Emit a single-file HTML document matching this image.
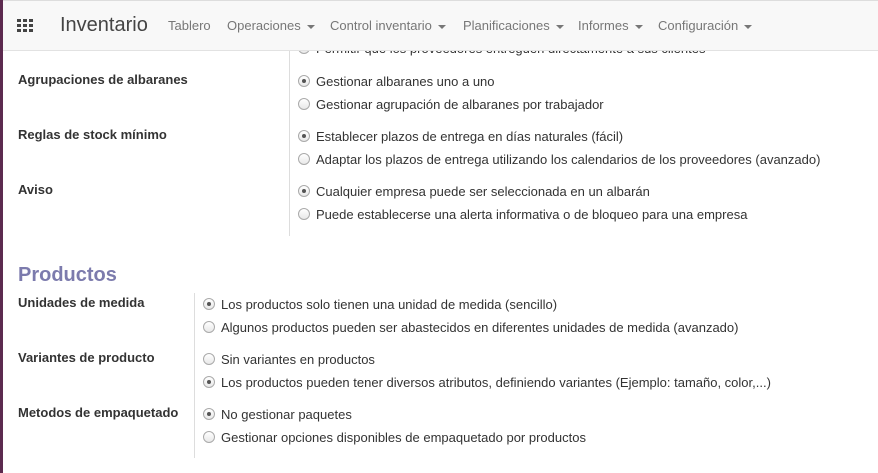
<!DOCTYPE html>
<html><head><style>
body{margin:0;width:878px;height:473px;overflow:hidden;background:#fff;font-family:"Liberation Sans",sans-serif;color:#333;font-size:13px;position:relative}
.lb{position:absolute;left:0;top:0;width:3px;height:473px;background:#5c2a4f}
.nav{position:absolute;left:3px;top:0;right:0;height:49px;background:#f8f8f8;border-top:1px solid #ddd;border-bottom:1px solid #e2e2e2}
.nav span{position:absolute;top:17px;color:#777;font-size:13px}
.caret{display:inline-block;border-left:4px solid transparent;border-right:4px solid transparent;border-top:4px solid #777;vertical-align:middle;margin-left:6px}
.t{position:absolute;white-space:nowrap}
.lbl{font-weight:bold;left:18px}
.r{position:absolute;width:10px;height:10px;border:1px solid #aaa;border-radius:50%;background:linear-gradient(#fff,#e8e8e8)}
.r.on::after{content:"";position:absolute;left:3px;top:3px;width:4px;height:4px;border-radius:50%;background:#555}
.vl{position:absolute;width:1px;background:#ddd}
</style></head><body>
<div class="lb"></div>
<div class="vl" style="left:289px;top:50px;height:186px"></div>
<div class="vl" style="left:194px;top:293px;height:165px"></div>
<div class="r" style="left:298px;top:42px"></div><div class="t" style="left:316px;top:41px">Permitir que los proveedores entreguen directamente a sus clientes</div>
<div class="nav">
<svg style="position:absolute;left:14px;top:18px" width="18" height="14"><g fill="#444"><rect x="0" y="0" width="4" height="3"/><rect x="6" y="0" width="4" height="3"/><rect x="12" y="0" width="4" height="3"/><rect x="0" y="5" width="4" height="3"/><rect x="6" y="5" width="4" height="3"/><rect x="12" y="5" width="4" height="3"/><rect x="0" y="10" width="4" height="3"/><rect x="6" y="10" width="4" height="3"/><rect x="12" y="10" width="4" height="3"/></g></svg>
<span style="left:57px;top:13px;font-size:20px;color:#444">Inventario</span>
<span style="left:165px">Tablero</span>
<span style="left:224px">Operaciones<i class="caret"></i></span>
<span style="left:327px">Control inventario<i class="caret"></i></span>
<span style="left:460px">Planificaciones<i class="caret"></i></span>
<span style="left:575px">Informes<i class="caret"></i></span>
<span style="left:655px">Configuración<i class="caret"></i></span>
</div>
<div class="t lbl" style="top:72px">Agrupaciones de albaranes</div>
<div class="r on" style="left:298px;top:75px"></div><div class="t" style="left:316px;top:74px">Gestionar albaranes uno a uno</div>
<div class="r" style="left:298px;top:98px"></div><div class="t" style="left:316px;top:97px">Gestionar agrupación de albaranes por trabajador</div>
<div class="t lbl" style="top:127px">Reglas de stock mínimo</div>
<div class="r on" style="left:298px;top:130px"></div><div class="t" style="left:316px;top:129px">Establecer plazos de entrega en días naturales (fácil)</div>
<div class="r" style="left:298px;top:153px"></div><div class="t" style="left:316px;top:152px">Adaptar los plazos de entrega utilizando los calendarios de los proveedores (avanzado)</div>
<div class="t lbl" style="top:182px">Aviso</div>
<div class="r on" style="left:298px;top:185px"></div><div class="t" style="left:316px;top:184px">Cualquier empresa puede ser seleccionada en un albarán</div>
<div class="r" style="left:298px;top:208px"></div><div class="t" style="left:316px;top:207px">Puede establecerse una alerta informativa o de bloqueo para una empresa</div>
<div class="t" style="left:18px;top:264px;font-size:20px;font-weight:bold;color:#7c7bad">Productos</div>
<div class="t lbl" style="top:295px">Unidades de medida</div>
<div class="r on" style="left:203px;top:298px"></div><div class="t" style="left:221px;top:297px">Los productos solo tienen una unidad de medida (sencillo)</div>
<div class="r" style="left:203px;top:321px"></div><div class="t" style="left:221px;top:320px">Algunos productos pueden ser abastecidos en diferentes unidades de medida (avanzado)</div>
<div class="t lbl" style="top:350px">Variantes de producto</div>
<div class="r" style="left:203px;top:353px"></div><div class="t" style="left:221px;top:352px">Sin variantes en productos</div>
<div class="r on" style="left:203px;top:376px"></div><div class="t" style="left:221px;top:375px">Los productos pueden tener diversos atributos, definiendo variantes (Ejemplo: tamaño, color,...)</div>
<div class="t lbl" style="top:405px">Metodos de empaquetado</div>
<div class="r on" style="left:203px;top:408px"></div><div class="t" style="left:221px;top:407px">No gestionar paquetes</div>
<div class="r" style="left:203px;top:431px"></div><div class="t" style="left:221px;top:430px">Gestionar opciones disponibles de empaquetado por productos</div>
</body></html>
